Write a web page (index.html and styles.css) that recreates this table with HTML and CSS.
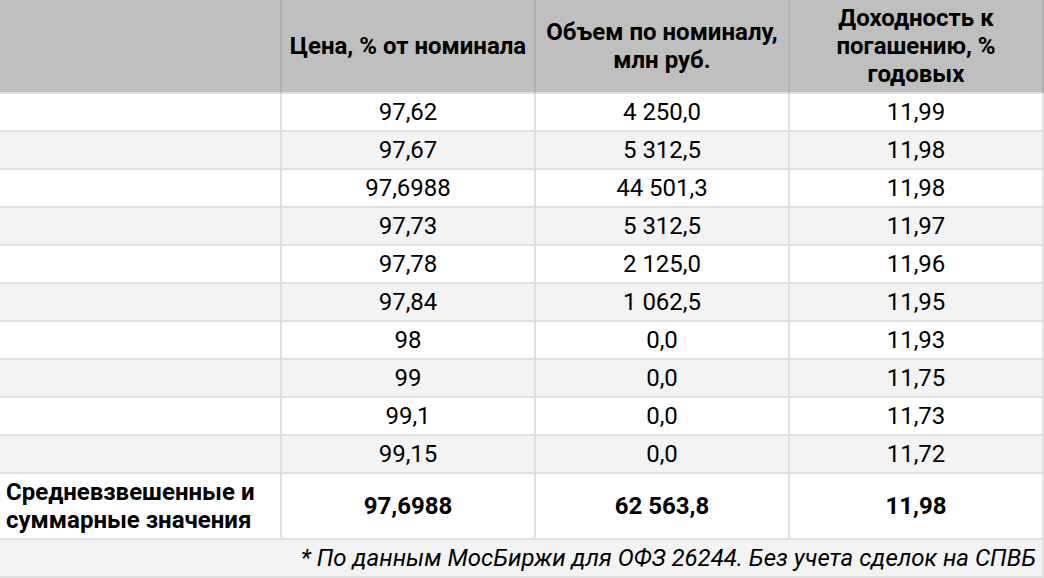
FILE: index.html
```html
<!DOCTYPE html>
<html lang="ru">
<head>
<meta charset="utf-8">
<link rel="stylesheet" href="styles.css">
</head>
<body>
<table class="tbl">
  <thead>
    <tr>
      <th class="c1"></th>
      <th class="c2">Цена, % от номинала</th>
      <th class="c3">Объем по номиналу,<br>млн руб.</th>
      <th class="c4">Доходность к<br>погашению, %<br>годовых</th>
    </tr>
  </thead>
  <tbody>
    <tr><td></td><td>97,62</td><td>4 250,0</td><td>11,99</td></tr>
    <tr class="alt"><td></td><td>97,67</td><td>5 312,5</td><td>11,98</td></tr>
    <tr><td></td><td>97,6988</td><td>44 501,3</td><td>11,98</td></tr>
    <tr class="alt"><td></td><td>97,73</td><td>5 312,5</td><td>11,97</td></tr>
    <tr><td></td><td>97,78</td><td>2 125,0</td><td>11,96</td></tr>
    <tr class="alt"><td></td><td>97,84</td><td>1 062,5</td><td>11,95</td></tr>
    <tr><td></td><td>98</td><td>0,0</td><td>11,93</td></tr>
    <tr class="alt"><td></td><td>99</td><td>0,0</td><td>11,75</td></tr>
    <tr><td></td><td>99,1</td><td>0,0</td><td>11,73</td></tr>
    <tr class="alt"><td></td><td>99,15</td><td>0,0</td><td>11,72</td></tr>
    <tr class="total"><td class="label">Средневзвешенные и<br>суммарные значения</td><td>97,6988</td><td>62 563,8</td><td>11,98</td></tr>
    <tr class="alt note"><td colspan="4">* По данным МосБиржи для ОФЗ 26244. Без учета сделок на СПВБ</td></tr>
  </tbody>
</table>
</body>
</html>
```
FILE: styles.css
```css
html, body {
  margin: 0;
  padding: 0;
  background: #ffffff;
}
body {
  font-family: Roboto, "Liberation Sans", Arial, sans-serif;
  color: #000;
  font-size: 24px;
}
.tbl {
  width: 1044px;
  table-layout: fixed;
  border-collapse: separate;
  border-spacing: 0;
}
.tbl th, .tbl td {
  box-sizing: border-box;
  padding: 4px 6px;
  line-height: 28px;
  text-align: center;
  vertical-align: middle;
  border-right: 2px solid #e0e0e0;
  border-bottom: 2px solid #e0e0e0;
  white-space: nowrap;
}
.tbl th {
  background: #bfbfbf;
  font-weight: 700;
  height: 94px;
  border-right-color: #b1b1b1;
}
.c1 { width: 282px; }
.c2, .c3, .c4 { width: 254px; }
.tbl td { height: 38px; }
.alt td { background: #f3f3f3; }
.total td {
  font-weight: 700;
  height: 66px;
}
.total .label { text-align: left; }
.note td {
  font-style: italic;
  text-align: right;
}
```
